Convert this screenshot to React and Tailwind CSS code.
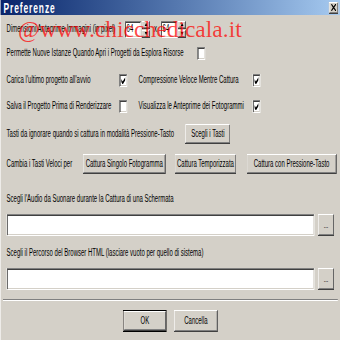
import React from "react";

const raised =
  "bg-[#d4d0c8] shadow-[inset_-1px_-1px_#404040,inset_1px_1px_#ffffff,inset_-2px_-2px_#808080,inset_2px_2px_#d4d0c8]";
const sunken =
  "bg-white shadow-[inset_1px_1px_#808080,inset_-1px_-1px_#ffffff,inset_2px_2px_#404040,inset_-2px_-2px_#d4d0c8]";

const Check = ({ checked }) => (
  <div className={`w-[13px] h-[13px] shrink-0 flex items-center justify-center ${sunken}`}>
    {checked && (
      <svg width="7" height="7" viewBox="0 0 7 7">
        <path d="M0 2v3l2 2h1l4-4V0L2.5 4.5z" fill="#000" />
      </svg>
    )}
  </div>
);

const Btn = ({ children, className = "" }) => (
  <div className={`h-[20px] shrink-0 flex items-center justify-center whitespace-nowrap ${raised} ${className}`}>{children}</div>
);

const Spin = ({ value }) => (
  <div className="flex items-center shrink-0">
    <div className={`w-[27px] h-[17px] flex items-center pl-[3px] ${sunken}`}>{value}</div>
    <div className="flex flex-col ml-[1px]">
      <div className={`w-[14px] h-[8px] flex items-center justify-center ${raised}`}>
        <svg width="5" height="3" viewBox="0 0 5 3"><path d="M2.5 0L5 3H0z" fill="#000" /></svg>
      </div>
      <div className={`w-[14px] h-[8px] mt-[1px] flex items-center justify-center ${raised}`}>
        <svg width="5" height="3" viewBox="0 0 5 3"><path d="M0 0h5L2.5 3z" fill="#000" /></svg>
      </div>
    </div>
  </div>
);

export default function App() {
  return (
    <div className="relative w-[340px] h-[340px] overflow-hidden bg-[#d4d0c8]">
      {/* dialog drawn at full width, squeezed horizontally like the screenshot */}
      <div
        className="w-[567px] h-[340px] origin-top-left scale-x-[0.6] bg-[#d4d0c8] text-[10px] leading-none text-black whitespace-nowrap border-l border-[#ffffff]"
        style={{ fontFamily: '"Liberation Sans", Arial, sans-serif' }}
      >
        {/* Title bar */}
        <div className="h-[15px] flex items-center justify-between pl-[5px] pr-[3px] bg-gradient-to-r from-[#0a246a] to-[#a6caf0]">
          <span className="text-white font-bold text-[14px] tracking-[1.5px]">Preferenze</span>
          <div className={`w-[16px] h-[12px] flex items-center justify-center ${raised}`}>
            <svg width="8" height="7" viewBox="0 0 8 7">
              <path d="M0 0l8 7M8 0L0 7" stroke="#000" strokeWidth="1.6" />
            </svg>
          </div>
        </div>

        <div className="flex flex-col px-[10px]">
          <div className="h-[18px] mt-[5px] flex items-center">
            <span className="w-[197px] shrink-0">Dimensioni Anteprime Immagini (in pixel)</span>
            <Spin value="64" />
            <span className="w-[18px] text-center">x</span>
            <Spin value="64" />
          </div>

          <div className="h-[18px] mt-[6px] flex items-center">
            <span className="w-[318px] shrink-0">Permette Nuove Istanze Quando Apri i Progetti da Esplora Risorse</span>
            <Check />
          </div>

          <div className="h-[18px] mt-[9px] flex items-center">
            <span className="w-[188px] shrink-0">Carica l'ultimo progetto all'avvio</span>
            <Check checked />
            <span className="w-[190px] shrink-0 ml-[19px]">Compressione Veloce Mentre Cattura</span>
            <Check checked />
          </div>

          <div className="h-[18px] mt-[8px] flex items-center">
            <span className="w-[188px] shrink-0">Salva il Progetto Prima di Renderizzare</span>
            <Check />
            <span className="w-[190px] shrink-0 ml-[19px]">Visualizza le Anteprime dei Fotogrammi</span>
            <Check checked />
          </div>

          <div className="h-[20px] mt-[9px] flex items-center">
            <span className="w-[298px] shrink-0">Tasti da ignorare quando si cattura in modalità Pressione-Tasto</span>
            <Btn className="w-[75px]">Scegli i Tasti</Btn>
          </div>

          <div className="h-[20px] mt-[10px] flex items-center">
            <span className="w-[127px] shrink-0">Cambia i Tasti Veloci per</span>
            <Btn className="w-[138px]">Cattura Singolo Fotogramma</Btn>
            <Btn className="w-[103px] ml-[15px]">Cattura Temporizzata</Btn>
            <Btn className="w-[150px] ml-[17px]">Cattura con Pressione-Tasto</Btn>
          </div>

          <div className="h-[14px] mt-[18px] flex items-center">
            Scegli l'Audio da Suonare durante la Cattura di una Schermata
          </div>
          <div className="h-[22px] mt-[8px] flex items-center">
            <div className={`w-[517px] h-[22px] ${sunken}`} />
            <Btn className="w-[27px] h-[22px] ml-[6px] text-[9px]">...</Btn>
          </div>

          <div className="h-[14px] mt-[10px] flex items-center">
            Scegli il Percorso del Browser HTML (lasciare vuoto per quello di sistema)
          </div>
          <div className="h-[22px] mt-[8px] flex items-center">
            <div className={`w-[517px] h-[22px] ${sunken}`} />
            <Btn className="w-[27px] h-[22px] ml-[6px] text-[9px]">...</Btn>
          </div>
        </div>

        <div className="mt-[9px] mx-[4px] h-[2px] border-t border-[#808080] border-b border-b-white" />

        <div className="mt-[9px] flex justify-center gap-[12px]">
          <div className="w-[73px] h-[22px] border border-black">
            <div className={`w-full h-full flex items-center justify-center ${raised}`}>OK</div>
          </div>
          <Btn className="w-[73px] h-[22px]">Cancella</Btn>
        </div>
      </div>

      {/* watermark */}
      <div
        className="absolute left-[18px] top-[18px] text-[23.5px] leading-none text-[rgba(255,0,0,0.72)] pointer-events-none"
        style={{ fontFamily: '"Liberation Serif", "Times New Roman", serif' }}
      >
        @www.chicchedicala.it
      </div>
    </div>
  );
}
